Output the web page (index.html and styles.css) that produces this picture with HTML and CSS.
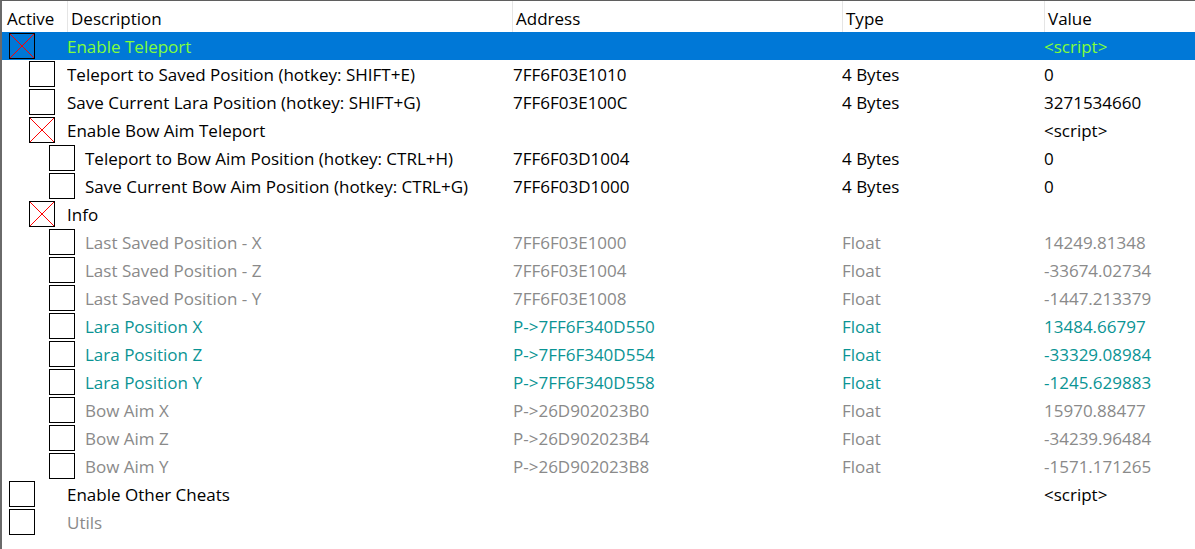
FILE: index.html
```html
<!DOCTYPE html>
<html>
<head>
<meta charset="utf-8">
<link rel="stylesheet" href="styles.css">
</head>
<body>
<div class="table">
  <div class="head">
    <div class="hc first">Active</div>
    <div class="hc">Description</div>
    <div class="hc">Address</div>
    <div class="hc">Type</div>
    <div class="hc">Value</div>
  </div>

  <div class="row sel lime">
    <div class="act l0"><span class="cb on"><svg viewBox="0 0 24 24"><path d="M0 0L24 24M24 0L0 24"/></svg></span></div>
    <div class="desc">Enable Teleport</div><div class="addr"></div><div class="type"></div><div class="val">&lt;script&gt;</div>
  </div>
  <div class="row">
    <div class="act l1"><span class="cb"></span></div>
    <div class="desc">Teleport to Saved Position (hotkey: SHIFT+E)</div><div class="addr">7FF6F03E1010</div><div class="type">4 Bytes</div><div class="val">0</div>
  </div>
  <div class="row">
    <div class="act l1"><span class="cb"></span></div>
    <div class="desc">Save Current Lara Position (hotkey: SHIFT+G)</div><div class="addr">7FF6F03E100C</div><div class="type">4 Bytes</div><div class="val">3271534660</div>
  </div>
  <div class="row">
    <div class="act l1"><span class="cb on"><svg viewBox="0 0 24 24"><path d="M0 0L24 24M24 0L0 24"/></svg></span></div>
    <div class="desc">Enable Bow Aim Teleport</div><div class="addr"></div><div class="type"></div><div class="val">&lt;script&gt;</div>
  </div>
  <div class="row">
    <div class="act l2"><span class="cb"></span></div>
    <div class="desc d2">Teleport to Bow Aim Position (hotkey: CTRL+H)</div><div class="addr">7FF6F03D1004</div><div class="type">4 Bytes</div><div class="val">0</div>
  </div>
  <div class="row">
    <div class="act l2"><span class="cb"></span></div>
    <div class="desc d2">Save Current Bow Aim Position (hotkey: CTRL+G)</div><div class="addr">7FF6F03D1000</div><div class="type">4 Bytes</div><div class="val">0</div>
  </div>
  <div class="row">
    <div class="act l1"><span class="cb on"><svg viewBox="0 0 24 24"><path d="M0 0L24 24M24 0L0 24"/></svg></span></div>
    <div class="desc">Info</div><div class="addr"></div><div class="type"></div><div class="val"></div>
  </div>
  <div class="row gray">
    <div class="act l2"><span class="cb"></span></div>
    <div class="desc d2">Last Saved Position - X</div><div class="addr">7FF6F03E1000</div><div class="type">Float</div><div class="val">14249.81348</div>
  </div>
  <div class="row gray">
    <div class="act l2"><span class="cb"></span></div>
    <div class="desc d2">Last Saved Position - Z</div><div class="addr">7FF6F03E1004</div><div class="type">Float</div><div class="val">-33674.02734</div>
  </div>
  <div class="row gray">
    <div class="act l2"><span class="cb"></span></div>
    <div class="desc d2">Last Saved Position - Y</div><div class="addr">7FF6F03E1008</div><div class="type">Float</div><div class="val">-1447.213379</div>
  </div>
  <div class="row teal">
    <div class="act l2"><span class="cb"></span></div>
    <div class="desc d2">Lara Position X</div><div class="addr">P-&gt;7FF6F340D550</div><div class="type">Float</div><div class="val">13484.66797</div>
  </div>
  <div class="row teal">
    <div class="act l2"><span class="cb"></span></div>
    <div class="desc d2">Lara Position Z</div><div class="addr">P-&gt;7FF6F340D554</div><div class="type">Float</div><div class="val">-33329.08984</div>
  </div>
  <div class="row teal">
    <div class="act l2"><span class="cb"></span></div>
    <div class="desc d2">Lara Position Y</div><div class="addr">P-&gt;7FF6F340D558</div><div class="type">Float</div><div class="val">-1245.629883</div>
  </div>
  <div class="row gray">
    <div class="act l2"><span class="cb"></span></div>
    <div class="desc d2">Bow Aim X</div><div class="addr">P-&gt;26D902023B0</div><div class="type">Float</div><div class="val">15970.88477</div>
  </div>
  <div class="row gray">
    <div class="act l2"><span class="cb"></span></div>
    <div class="desc d2">Bow Aim Z</div><div class="addr">P-&gt;26D902023B4</div><div class="type">Float</div><div class="val">-34239.96484</div>
  </div>
  <div class="row gray">
    <div class="act l2"><span class="cb"></span></div>
    <div class="desc d2">Bow Aim Y</div><div class="addr">P-&gt;26D902023B8</div><div class="type">Float</div><div class="val">-1571.171265</div>
  </div>
  <div class="row">
    <div class="act l0"><span class="cb"></span></div>
    <div class="desc">Enable Other Cheats</div><div class="addr"></div><div class="type"></div><div class="val">&lt;script&gt;</div>
  </div>
  <div class="row gray">
    <div class="act l0"><span class="cb"></span></div>
    <div class="desc">Utils</div><div class="addr"></div><div class="type"></div><div class="val"></div>
  </div>
</div>
</body>
</html>
```
FILE: styles.css
```css
html, body {
  margin: 0;
  padding: 0;
  background: #ffffff;
}
body {
  font-family: "Open Sans", "Noto Sans", "Liberation Sans", sans-serif;
  font-size: 17px;
  color: #000000;
}
.table {
  width: 1195px;
  height: 549px;
  box-sizing: border-box;
  border-top: 1px solid #5f5f5f;
  border-left: 2px solid #6a6a6a;
  overflow: hidden;
}
.head, .row {
  display: grid;
  grid-template-columns: 65px 445px 330px 202px 1fr;
}
.head {
  height: 31px;
  align-items: stretch;
}
.hc {
  border-left: 1px solid #e5e5e5;
  padding: 4px 0 0 3px;
  line-height: 27px;
  white-space: nowrap;
}
.hc.first {
  border-left: none;
  padding-left: 5px;
}
.row {
  height: 28px;
  white-space: nowrap;
}
.desc, .addr, .type, .val {
  overflow: hidden;
  padding-top: 2px;
  line-height: 26px;
}
.act {
  display: flex;
  align-items: center;
  overflow: visible;
  position: relative;
  z-index: 1;
}
.l0 { padding-left: 7px; }
.l1 { padding-left: 27px; }
.l2 { padding-left: 47px; }
.cb {
  width: 26px;
  height: 26px;
  box-sizing: border-box;
  border: 1px solid #000000;
  display: block;
  flex: none;
}
.cb svg {
  display: block;
  width: 24px;
  height: 24px;
}
.cb svg path {
  stroke: #ff0000;
  stroke-width: 1;
  fill: none;
}
.desc { padding-left: 0; }
.desc.d2 { padding-left: 18px; }
.addr { padding-left: 1px; }
.type, .val { padding-left: 0; }
.sel {
  background: #0078d7;
}
.lime { color: #80ff3a; }
.gray { color: #8a8a8a; }
.teal { color: #0a9494; }
```
